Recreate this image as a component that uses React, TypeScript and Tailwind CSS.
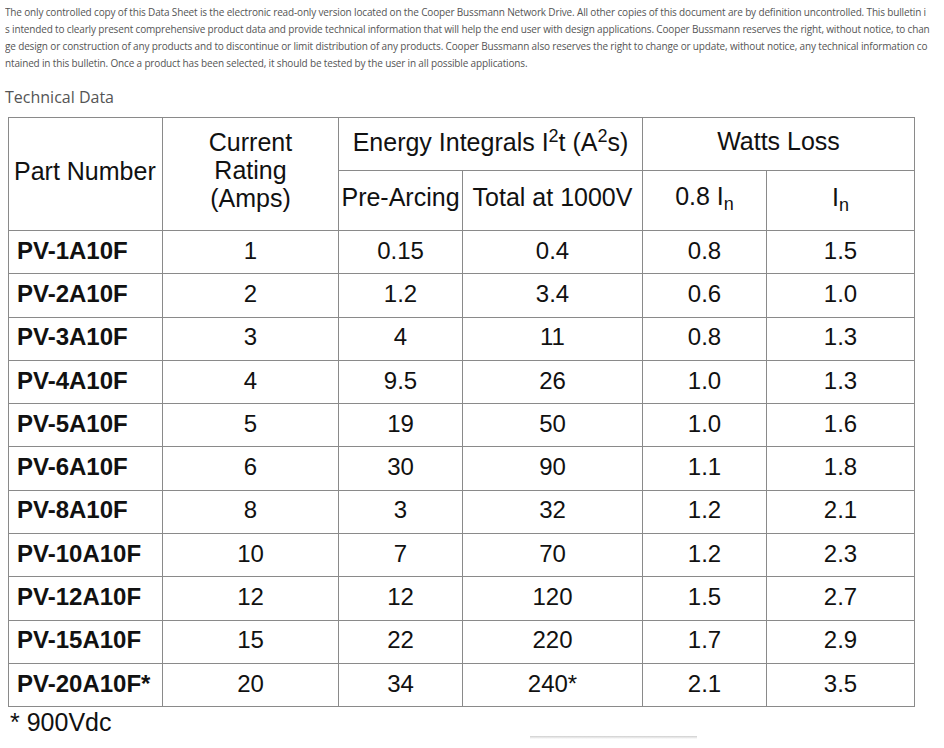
import React from "react"

const notice = [
  "The only controlled copy of this Data Sheet is the electronic read-only version located on the Cooper Bussmann Network Drive. All other copies of this document are by definition uncontrolled. This bulletin i",
  "s intended to clearly present comprehensive product data and provide technical information that will help the end user with design applications. Cooper Bussmann reserves the right, without notice, to chan",
  "ge design or construction of any products and to discontinue or limit distribution of any products. Cooper Bussmann also reserves the right to change or update, without notice, any technical information co",
  "ntained in this bulletin. Once a product has been selected, it should be tested by the user in all possible applications.",
]

const rows = [
  ["PV-1A10F", "1", "0.15", "0.4", "0.8", "1.5"],
  ["PV-2A10F", "2", "1.2", "3.4", "0.6", "1.0"],
  ["PV-3A10F", "3", "4", "11", "0.8", "1.3"],
  ["PV-4A10F", "4", "9.5", "26", "1.0", "1.3"],
  ["PV-5A10F", "5", "19", "50", "1.0", "1.6"],
  ["PV-6A10F", "6", "30", "90", "1.1", "1.8"],
  ["PV-8A10F", "8", "3", "32", "1.2", "2.1"],
  ["PV-10A10F", "10", "7", "70", "1.2", "2.3"],
  ["PV-12A10F", "12", "12", "120", "1.5", "2.7"],
  ["PV-15A10F", "15", "22", "220", "1.7", "2.9"],
  ["PV-20A10F*", "20", "34", "240*", "2.1", "3.5"],
]

const cell = "border border-[#8a8a8a] p-0"

export default function App() {
  return (
    <div className="min-h-[748px] bg-white text-[#555]">
      <div className="px-[5px] pt-[4px] font-['Open_Sans',sans-serif] text-[10px] leading-[17px] tracking-[-0.155px]">
        {notice.map((line, i) => (
          <div key={i} className="overflow-hidden whitespace-nowrap">
            {line}
          </div>
        ))}
      </div>

      <h2 className="mt-[14px] px-[5px] font-['Open_Sans',sans-serif] text-[16px] leading-[22px] text-[#555]">
        Technical Data
      </h2>

      <div className="ml-[8px] mt-[9px] w-[906px] font-['Liberation_Sans',Arial,sans-serif] text-[#111]">
        <table className="w-[906px] table-fixed border-collapse border border-[#b5b5b5] text-[24px]">
          <colgroup>
            <col className="w-[154px]" />
            <col className="w-[176px]" />
            <col className="w-[124px]" />
            <col className="w-[180px]" />
            <col className="w-[124px]" />
            <col className="w-[148px]" />
          </colgroup>
          <thead className="text-[25px]">
            <tr className="h-[53px]">
              <th rowSpan={2} className={`${cell} pb-[5px] pl-[5px] text-left font-normal`}>
                Part Number
              </th>
              <th rowSpan={2} className={`${cell} pb-[8px] text-center font-normal leading-[28px]`}>
                Current
                <br />
                Rating
                <br />
                (Amps)
              </th>
              <th colSpan={2} className={`${cell} pb-[3px] text-center font-normal`}>
                Energy Integrals I<sup className="text-[18px]">2</sup>t (A<sup className="text-[18px]">2</sup>s)
              </th>
              <th colSpan={2} className={`${cell} pb-[4px] text-center font-normal`}>
                Watts Loss
              </th>
            </tr>
            <tr className="h-[60px]">
              <th className={`${cell} pb-[5px] text-center font-normal`}>Pre-Arcing</th>
              <th className={`${cell} pb-[5px] text-center font-normal`}>Total at 1000V</th>
              <th className={`${cell} pb-[7px] text-center font-normal`}>
                0.8 I<sub className="text-[18px]">n</sub>
              </th>
              <th className={`${cell} pb-[5px] text-center font-normal`}>
                I<sub className="text-[18px]">n</sub>
              </th>
            </tr>
          </thead>
          <tbody>
            {rows.map((r) => (
              <tr key={r[0]} className="h-[43.3px]">
                <td className={`${cell} pb-[3px] pl-[8px] text-left font-bold`}>{r[0]}</td>
                {r.slice(1).map((v, j) => (
                  <td key={j} className={`${cell} pb-[3px] text-center`}>
                    {v}
                  </td>
                ))}
              </tr>
            ))}
          </tbody>
        </table>
      </div>

      <div className="mt-[2px] pl-[10px] font-['Liberation_Sans',Arial,sans-serif] text-[25px] leading-[27px] text-[#111]">
        * 900Vdc
      </div>

      <div className="ml-[530px] h-[3px] w-[167px] bg-gradient-to-b from-[#cfcfcf] to-white" />
    </div>
  )
}
